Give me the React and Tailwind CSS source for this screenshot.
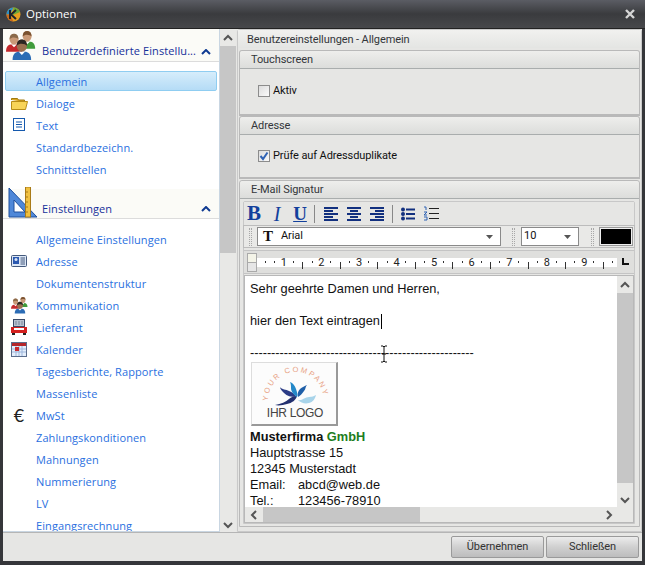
import React from "react";

const Person = ({ x, y, s = 1, shirt, hair, skin = "#c99a78" }) => (
  <g transform={`translate(${x} ${y}) scale(${s})`}>
    <path d="M0 20c0-6 3-8 6-8h6c3 0 6 2 6 8z" fill={shirt} />
    <path d="M6 12l3 3 3-3z" fill="#fff" />
    <ellipse cx="9" cy="6" rx="5" ry="6" fill={skin} />
    <path d="M4 6c0-4 2-6 5-6s5 2 5 6c-2-2-7-3-10 0z" fill={hair} />
  </g>
);

const People = ({ size }) => (
  <svg width={size} height={size} viewBox="0 0 32 32">
    <Person x={14} y={0} s={0.95} shirt="#3f9b3a" hair="#7a5230" />
    <Person x={0} y={3} s={0.95} shirt="#c3282c" hair="#8a6a4a" />
    <Person x={7} y={9} s={1.1} shirt="#2b6cb5" hair="#2b2622" skin="#9a7050" />
  </svg>
);

const FolderIcon = () => (
  <svg width="17" height="13" viewBox="0 0 17 13">
    <path d="M.5 3V1.5h6l1 1.5h6V5" fill="#d9a520" stroke="#a07a10" />
    <path d="M.5 12.5V4.5h16l-2 8z" fill="#f8d458" stroke="#b88d18" />
  </svg>
);

const DocIcon = () => (
  <svg width="13" height="14" viewBox="0 0 13 14">
    <rect x=".5" y=".5" width="11" height="12" fill="#fff" stroke="#1559ad" />
    <path d="M3 4h6M3 6.5h6M3 9h6" stroke="#1559ad" />
  </svg>
);

const SetSquare = () => (
  <svg width="30" height="31" viewBox="0 0 30 31">
    <path d="M1 1l28 29H1z" fill="#4f88d8" stroke="#1e4f9c" />
    <path d="M6 13l11 12H6z" fill="#fff" stroke="#1e4f9c" />
    <rect x="17.5" y="0" width="5" height="30" fill="#f0c040" stroke="#a87a18" />
    <path d="M18 5h2M18 10h2M18 15h2M18 20h2M18 25h2" stroke="#a87a18" />
  </svg>
);

const CardIcon = () => (
  <svg width="16" height="12" viewBox="0 0 16 12">
    <rect x=".5" y=".5" width="15" height="11" rx="1" fill="#dbe6f5" stroke="#44597c" />
    <rect x="2" y="2" width="6" height="7" fill="#2a58b0" />
    <circle cx="5" cy="4.5" r="1.5" fill="#dbe6f5" />
    <path d="M9.5 3h4.5M9.5 5h4.5M9.5 7h4.5M9.5 9h4.5" stroke="#44597c" />
  </svg>
);

const TruckIcon = () => (
  <svg width="16" height="16" viewBox="0 0 16 16">
    <rect x="2.5" y=".5" width="11" height="7" fill="#b9c2d0" stroke="#3a4a66" />
    <path d="M5 2v4M8 2v4M11 2v4" stroke="#7b879b" />
    <rect x="0" y="8" width="16" height="6" fill="#d4201f" />
    <rect x="3" y="9" width="10" height="2" fill="#fff" />
    <rect x="1" y="14" width="3" height="2" fill="#222" />
    <rect x="12" y="14" width="3" height="2" fill="#222" />
  </svg>
);

const CalendarIcon = () => (
  <svg width="16" height="15" viewBox="0 0 16 15">
    <rect x=".5" y=".5" width="15" height="14" fill="#e4eefb" stroke="#5b6d8c" />
    <rect x="1" y="1" width="14" height="3" fill="#b4262a" />
    <path d="M1 7h14M1 10h14M5 4v10M8 4v10M11 4v10" stroke="#9db6dc" />
    <rect x="4" y="5" width="4" height="4" fill="#c8282c" />
  </svg>
);

const Row = ({ label, icon, active }) => (
  <div
    className={
      active
        ? "flex items-center h-[20px] shrink-0 my-px mx-[2px] rounded-[2px] border border-[#8fcdf1] bg-gradient-to-b from-[#d6edfb] to-[#b5dcf6]"
        : "flex items-center h-[22px] shrink-0 mx-[2px]"
    }
  >
    <div className={`flex justify-center items-center shrink-0 pr-[3px] ${active ? "w-[30px]" : "w-[31px]"}`}>{icon}</div>
    <span className="text-[11px] tracking-[0.1px] text-[#2a70e0] pt-[2px]">{label}</span>
  </div>
);

const Chevron = () => (
  <svg width="10" height="6" viewBox="0 0 10 6" className="mr-[8px]">
    <path d="M1 5l4-4 4 4" fill="none" stroke="#0f3a92" strokeWidth="2" />
  </svg>
);

const SectionHead = ({ label, children, className, labelClass }) => (
  <div className={`flex items-end border-b border-[#dcdcdc] bg-[#fbfbf7] ${className}`}>
    <div className="w-[36px] shrink-0 flex justify-start pl-[3px] self-end">{children}</div>
    <span className={`flex-1 text-[11px] tracking-[0.1px] text-[#15309a] pl-[3px] whitespace-nowrap ${labelClass}`}>{label}</span>
    <div className="pb-[6px]">
      <Chevron />
    </div>
  </div>
);

const Sidebar = () => (
  <div className="w-[217px] shrink-0 bg-white border border-[#c9d6e2] border-t-0 border-l-0 flex flex-col overflow-hidden">
    <SectionHead label="Benutzerdefinierte Einstellu..." className="h-[33px] shrink-0" labelClass="pb-[2px]">
      <People size={30} />
    </SectionHead>
    <div className="h-[8px] shrink-0" />
    <Row label="Allgemein" active />
    <Row label="Dialoge" icon={<FolderIcon />} />
    <Row label="Text" icon={<DocIcon />} />
    <Row label="Standardbezeichn." />
    <Row label="Schnittstellen" />
    <div className="h-[9px] shrink-0" />
    <SectionHead label="Einstellungen" className="h-[30px] shrink-0 mb-[9px]" labelClass="pb-px">
      <div className="pl-[2px]">
        <SetSquare />
      </div>
    </SectionHead>
    <Row label="Allgemeine Einstellungen" />
    <Row label="Adresse" icon={<CardIcon />} />
    <Row label="Dokumentenstruktur" />
    <Row label="Kommunikation" icon={<People size={17} />} />
    <Row label="Lieferant" icon={<TruckIcon />} />
    <Row label="Kalender" icon={<CalendarIcon />} />
    <Row label="Tagesberichte, Rapporte" />
    <Row label="Massenliste" />
    <Row label="MwSt" icon={<span className="text-[18px] leading-none text-[#222] font-['Lato',sans-serif]">€</span>} />
    <Row label="Zahlungskonditionen" />
    <Row label="Mahnungen" />
    <Row label="Nummerierung" />
    <Row label="LV" />
    <Row label="Eingangsrechnung" />
  </div>
);

const Arrow = ({ dir }) => {
  const d = { up: "M1 7l4-4 4 4", down: "M1 3l4 4 4-4", left: "M7 1L3 5l4 4", right: "M3 1l4 4-4 4" }[dir];
  return (
    <svg width="10" height="10" viewBox="0 0 10 10">
      <path d={d} fill="none" stroke="#555" strokeWidth="2" />
    </svg>
  );
};

const VScroll = ({ thumb, className = "" }) => (
  <div className={`flex flex-col items-center bg-[#e8e8e6] shrink-0 ${className}`}>
    <div className="h-[17px] flex items-center justify-center shrink-0">
      <Arrow dir="up" />
    </div>
    <div className="flex-1 w-full">
      <div className="bg-[#c6c6c6] w-full" style={{ height: thumb }} />
    </div>
    <div className="h-[15px] flex items-center justify-center shrink-0">
      <Arrow dir="down" />
    </div>
  </div>
);

const GroupHead = ({ label }) => (
  <div className="h-[18px] shrink-0 rounded-t-[3px] border-b border-[#a9adad] bg-gradient-to-b from-[#eeeeec] to-[#dcdddb] flex items-center pl-[11px] pt-[2px] text-[11px] tracking-[-0.1px] text-[#33363a] font-['Roboto',sans-serif]">
    {label}
  </div>
);

const Check = ({ checked, label }) => (
  <div className="flex items-center gap-[3px] pl-[18px] text-[11px] tracking-[-0.1px] text-[#111] font-['Roboto',sans-serif]">
    <div className="w-[12px] h-[12px] border border-[#8c8c8c] bg-gradient-to-br from-[#dcdcdc] to-[#fafafa] flex items-center justify-center">
      {checked && (
        <svg width="10" height="10" viewBox="0 0 10 10">
          <path d="M1.5 5l2.5 3 4.5-6.5" fill="none" stroke="#2f62b4" strokeWidth="2" />
        </svg>
      )}
    </div>
    <span className="pt-px">{label}</span>
  </div>
);

const Bars = ({ kind }) => {
  const rows = {
    left: [[0, 14], [0, 9], [0, 14], [0, 9], [0, 14]],
    center: [[0, 14], [3, 8], [0, 14], [3, 8], [0, 14]],
    right: [[0, 14], [5, 9], [0, 14], [5, 9], [0, 14]],
  }[kind];
  return (
    <svg width="14" height="14" viewBox="0 0 14 14">
      {rows.map(([x, w], i) => (
        <rect key={i} x={x} y={i * 3} width={w} height="2" fill="#12307f" />
      ))}
    </svg>
  );
};

const Grip = () => (
  <div className="w-[3px] h-[18px] mx-[3px] border-l border-dotted border-[#a8a8a8] border-r shrink-0" />
);

const Slot = ({ tall }) => (
  <div className="w-[9.4px] shrink-0 flex justify-center items-start h-[9px]">
    <span className={`w-px bg-[#333] ${tall ? "h-[7px] mt-[4px]" : "h-[2px] mt-[3px]"}`} />
  </div>
);

const Ruler = () => (
  <div className="flex items-center h-[24px] shrink-0 bg-[#dfdfdd] border-y border-[#c4c4c4] pl-[3px] pr-[9px] mt-[2px]">
    <div className="w-[10px] h-[19px] border border-[#aaa] flex flex-col shrink-0">
      <div className="flex-1 bg-[#f4f4e8] border-b border-[#aaa]" />
      <div className="flex-1 bg-[#e6e6e6]" />
    </div>
    <div className="flex-1 h-[9px] bg-white flex items-center pl-[3.4px] text-[11px] leading-[9px] text-[#222] font-['Roboto',sans-serif]">
      {[1, 2, 3, 4, 5, 6, 7, 8, 9].map((n) => (
        <div key={n} className="flex items-center shrink-0">
          {n > 1 && <Slot />}
          <Slot tall={n > 1} />
          <Slot />
          <span className="w-[9.4px] text-center shrink-0">{n}</span>
        </div>
      ))}
      <Slot />
      <Slot tall />
      <Slot />
    </div>
    <svg width="8" height="8" viewBox="0 0 8 8" className="ml-[5px] shrink-0">
      <path d="M1 0v6h6" fill="none" stroke="#111" strokeWidth="2" />
    </svg>
  </div>
);

const Logo = () => (
  <div className="w-[87px] h-[64px] mt-[1px] ml-px bg-[#fcfcfc] border border-[#ddd] border-r-2 border-b-2 border-r-[#999] border-b-[#999]">
    <svg width="84" height="61" viewBox="0 0 84 61">
      <defs>
        <path id="arc" d="M16 38a26 27 0 0 1 56 0" />
      </defs>
      <text fontSize="7.5" letterSpacing="2" fill="#e8a284" fontFamily="Liberation Sans, sans-serif">
        <textPath href="#arc">YOUR COMPANY</textPath>
      </text>
      <path d="M23 42c6-1 11-3 14-6 2-2 5-3 8-3-1 4-5 7-10 8-4 1-8 2-12 1z" fill="#22306f" />
      <path d="M28 24c2 3 6 2 9 4 3 1 6 3 7 6-5 0-9-1-12-4-2-2-4-4-4-6z" fill="#2b3c86" />
      <path d="M38 19c3 1 5 4 6 7 1 3 2 6 1 8-3-2-6-5-6-9 0-2 0-4-1-6z" fill="#2488c8" />
      <path d="M55 22c-2 2-1 4-3 6-2 3-4 5-6 6-1-3 0-6 2-8 2-2 5-3 7-4z" fill="#1f5fa8" />
      <path d="M46 37c4 1 7-3 11-3 3 0 5-1 7-2-1 4-3 7-7 8-4 1-8 0-11-3z" fill="#a8d4ea" />
      <text x="43" y="54" textAnchor="middle" fontSize="12" letterSpacing="-0.3" fill="#444" fontFamily="Liberation Sans, sans-serif">
        IHR LOGO
      </text>
    </svg>
  </div>
);

const Editor = () => (
  <div className="flex-1 min-h-0 mt-px border border-[#b8b8b8] flex flex-col">
    <div className="flex-1 min-h-0 flex">
      <div className="flex-1 bg-white pl-[5px] pt-[5px] text-[12.8px] leading-[16px] text-[#111] font-['Liberation_Sans',sans-serif] overflow-hidden">
        <div>Sehr geehrte Damen und Herren,</div>
        <div className="mt-[16px] flex items-center h-[16px]">
          hier den Text eintragen
          <span className="w-px h-[15px] bg-black ml-px" />
        </div>
        <div className="mt-[16px] h-[16px] relative whitespace-nowrap tracking-[-0.04px]">
          -----------------------------------------------------
          <svg width="10" height="18" viewBox="0 0 10 18" className="absolute left-[129px] top-0">
            <path d="M2 1h2l1 1 1-1h2M5 2v14M2 17h2l1-1 1 1h2M3 9h4" fill="none" stroke="#111" />
          </svg>
        </div>
        <Logo />
        <div className="font-bold mt-[3px]">
          Musterfirma <span className="text-[#1d7d1d]">GmbH</span>
        </div>
        <div>Hauptstrasse 15</div>
        <div>12345 Musterstadt</div>
        <div className="flex">
          <span className="w-[48px]">Email:</span>abcd@web.de
        </div>
        <div className="flex">
          <span className="w-[48px]">Tel.:</span>123456-78910
        </div>
      </div>
      <VScroll thumb={190} className="w-[16px]" />
    </div>
    <div className="h-[15px] shrink-0 flex items-stretch bg-[#e8e8e6] pr-[16px]">
      <div className="w-[18px] flex items-center justify-center">
        <Arrow dir="left" />
      </div>
      <div className="flex-1">
        <div className="h-full w-[157px] bg-[#c6c6c6]" />
      </div>
      <div className="w-[17px] flex items-center justify-center">
        <Arrow dir="right" />
      </div>
    </div>
  </div>
);

const Toolbar = () => (
  <div className="shrink-0 flex flex-col border border-[#c8c8c8] rounded-t-[2px] ml-[3px] mr-[4px] mt-[2px] flex-1 min-h-0">
    <div className="h-[23px] shrink-0 flex items-center text-[#12409c] font-['Liberation_Serif',serif] bg-[#e6e6e4]">
      <span className="w-[20px] text-[21px] font-bold leading-none text-center">B</span>
      <span className="w-[26px] text-[20px] italic leading-none text-center">I</span>
      <span className="w-[20px] text-[19px] font-bold underline leading-none text-center">U</span>
      <div className="w-px h-[18px] bg-[#888] mx-[4px]" />
      <div className="flex gap-[9px] pl-[5px] pr-[5px]">
        <Bars kind="left" />
        <Bars kind="center" />
        <Bars kind="right" />
      </div>
      <div className="w-px h-[18px] bg-[#888] ml-[3px]" />
      <svg width="14" height="14" viewBox="0 0 14 14" className="ml-[8px]">
        <circle cx="2" cy="2.5" r="2" fill="#12307f" />
        <circle cx="2" cy="7" r="2" fill="#12307f" />
        <circle cx="2" cy="11.5" r="2" fill="#12307f" />
        <path d="M5 2.5h9M5 7h9M5 11.5h9" stroke="#12307f" strokeWidth="2" />
      </svg>
      <svg width="16" height="15" viewBox="0 0 16 15" className="ml-[8px]">
        <path d="M1 1h2v3M1 6h3L1 9h3M1 11h3v3H1" fill="none" stroke="#2f62b4" />
        <path d="M6 2.5h10M6 7.5h10M6 12.5h10" stroke="#222" />
      </svg>
    </div>
    <div className="h-[23px] shrink-0 flex items-center border border-[#bcbcbc] -mx-px bg-[#e9e9e7] pl-[2px]">
      <Grip />
      <div className="w-[244px] h-[19px] ml-[2px] bg-white border border-[#8a8a8a] flex items-center pl-[5px] text-[11px] tracking-[-0.1px] text-[#111] font-['Roboto',sans-serif]">
        <span className="w-[18px] shrink-0 font-['Liberation_Serif',serif] font-bold text-[15px] leading-none">T</span>
        <span className="flex-1">Arial</span>
        <svg width="7" height="4" viewBox="0 0 7 4" className="mr-[7px]">
          <path d="M0 0h7L3.5 4z" fill="#555" />
        </svg>
      </div>
      <div className="ml-[8px]" />
      <Grip />
      <div className="w-[58px] h-[19px] ml-[3px] bg-white border border-[#8a8a8a] flex items-center pl-[2px] text-[11px] text-[#111] font-['Roboto',sans-serif]">
        <span className="flex-1">10</span>
        <svg width="7" height="4" viewBox="0 0 7 4" className="mr-[7px]">
          <path d="M0 0h7L3.5 4z" fill="#555" />
        </svg>
      </div>
      <div className="ml-[9px]" />
      <Grip />
      <div className="w-[34px] h-[19px] ml-[2px] border border-[#999] p-[1px] bg-[#efefef]">
        <div className="w-full h-full bg-black" />
      </div>
    </div>
    <Ruler />
    <Editor />
  </div>
);

const RightPanel = () => (
  <div className="flex-1 min-w-0 flex flex-col border border-[#c9c9c9] rounded-t-[3px] bg-[#e6e6e4]">
    <div className="h-[18px] shrink-0 flex items-center pl-[9px] pt-[2px] text-[11px] tracking-[-0.1px] text-[#33363a] font-['Roboto',sans-serif] bg-gradient-to-b from-[#f1f1ef] to-[#e4e5e3]">
      Benutzereinstellungen - Allgemein
    </div>
    <div className="flex-1 min-h-0 flex flex-col px-px pb-[4px]">
      <div className="h-[66px] shrink-0 border border-[#b9b9b9] border-b-2 rounded-t-[3px] flex flex-col mt-[2px]">
        <GroupHead label="Touchscreen" />
        <div className="flex-1 pt-[13px]">
          <Check label="Aktiv" />
        </div>
      </div>
      <div className="h-[63px] shrink-0 border border-[#b9b9b9] border-b-2 rounded-t-[3px] flex flex-col">
        <GroupHead label="Adresse" />
        <div className="flex-1 pt-[12px]">
          <Check checked label="Prüfe auf Adressduplikate" />
        </div>
      </div>
      <div className="flex-1 min-h-0 mt-[1px] border border-[#b9b9b9] rounded-t-[3px] flex flex-col pb-[2px]">
        <GroupHead label="E-Mail Signatur" />
        <Toolbar />
      </div>
    </div>
  </div>
);

const FooterButton = ({ label }) => (
  <button className="w-[93px] h-[22px] rounded-[2px] border border-[#9a9a9a] bg-gradient-to-b from-[#ececec] via-[#d0d0d0] to-[#bdbdbd] text-[11px] tracking-[-0.1px] text-[#333] font-['Roboto',sans-serif]">
    {label}
  </button>
);

export default function App() {
  return (
    <div className="w-[645px] h-[565px] flex flex-col bg-[#35363a] font-['Open_Sans',sans-serif] overflow-hidden">
      <div className="h-[29px] shrink-0 flex items-center bg-gradient-to-b from-[#5b5d64] via-[#3a3b3e] to-[#47484b] border-b border-[#222] pl-[6px] pr-[10px]">
        <svg width="15" height="15" viewBox="0 0 15 15" className="mr-[5px]">
          <circle cx="7.5" cy="7.5" r="7" fill="#e8a020" />
          <path d="M.5 7.5A7 7 0 0 1 7.5.5L4 7.5z" fill="#2b8fc9" />
          <path d="M7.5 14.5A7 7 0 0 1 .5 7.5H4z" fill="#c86a20" />
          <path d="M7.5.5A7 7 0 0 1 14 5L7 8z" fill="#6ba83a" />
          <path d="M4 3v9M10 3L5 7.5 10 12" fill="none" stroke="#20242a" strokeWidth="2" />
        </svg>
        <span className="flex-1 text-[11.5px] text-white">Optionen</span>
        <svg width="10" height="10" viewBox="0 0 10 10">
          <path d="M1 1l8 8M9 1l-8 8" stroke="#d5d5d5" strokeWidth="2.4" />
        </svg>
      </div>
      <div className="flex-1 min-h-0 mx-[3px] mb-[4px] flex flex-col bg-[#e6e6e4]">
        <div className="flex-1 min-h-0 flex border-b border-[#b5b5b5]">
          <Sidebar />
          <VScroll thumb={207} className="w-[16px] mr-px" />
          <RightPanel />
        </div>
        <div className="h-[28px] shrink-0 flex items-center justify-end gap-[2px] pr-[3px]">
          <FooterButton label="Übernehmen" />
          <FooterButton label="Schließen" />
        </div>
      </div>
    </div>
  );
}
